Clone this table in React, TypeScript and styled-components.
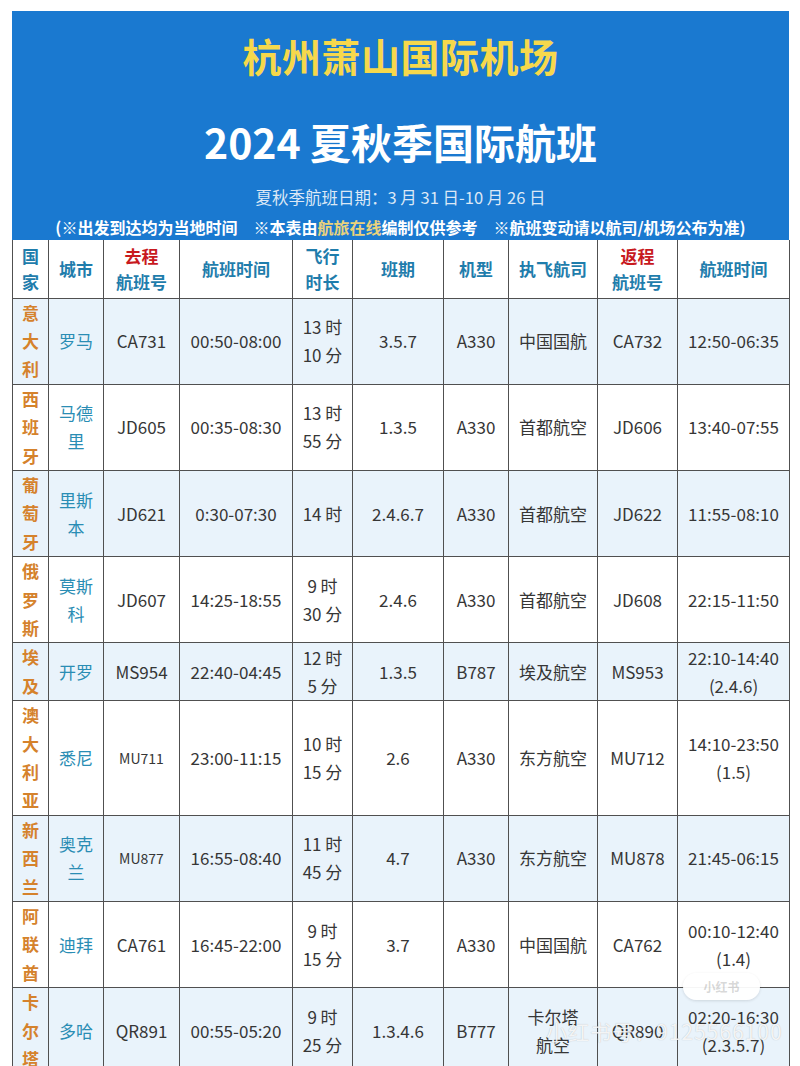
import * as React from 'react';
import styled, { createGlobalStyle } from 'styled-components';

const GlobalStyle = createGlobalStyle`
  html, body {
    margin: 0;
    padding: 0;
    background: #ffffff;
  }
  body {
    font-family: "Noto Sans CJK SC", "Noto Sans", sans-serif;
  }
`;

const Page = styled.div`
  position: relative;
  width: 800px;
  height: 1066px;
  overflow: hidden;
  box-sizing: border-box;
  padding: 11px 11px 0 12px;
  background: #ffffff;
`;

const Banner = styled.header`
  height: 229px;
  background: #1a79d0;
  display: flex;
  flex-direction: column;
  align-items: center;
  text-align: center;
`;

const Title = styled.h1`
  margin: 19px 0 0;
  font-size: 39px;
  line-height: 50px;
  font-weight: 700;
  color: #f6d84c;
  letter-spacing: 0.5px;
`;

const Subtitle = styled.h2`
  margin: 36px 0 0;
  font-size: 41px;
  line-height: 50px;
  font-weight: 700;
  color: #ffffff;
`;

const DateLine = styled.div`
  margin-top: 19px;
  font-size: 16.5px;
  line-height: 24px;
  color: #dce8f6;
`;

const Note = styled.div`
  margin-top: 5px;
  font-size: 16px;
  line-height: 26px;
  font-weight: 700;
  color: #ffffff;
  white-space: pre;
`;

const Mark = styled.span`
  color: #e9d27c;
`;

const Table = styled.table`
  width: 777px;
  border-collapse: collapse;
  table-layout: fixed;
  background: #ffffff;
`;

const HeadRow = styled.tr`
  height: 58px;
`;

const HeadCell = styled.th`
  border: 1.5px solid #505050;
  border-top: none;
  padding: 0;
  font-size: 17px;
  line-height: 26px;
  font-weight: 700;
  color: #1f7dac;
  text-align: center;
  vertical-align: middle;
  white-space: pre-line;
`;

const Red = styled.span`
  color: #c8191e;
`;

const Row = styled.tr<{ $shade: boolean }>`
  background: ${p => (p.$shade ? '#e9f3fb' : '#ffffff')};
`;

const Cell = styled.td<{ $small?: boolean }>`
  border: 1.5px solid #505050;
  padding: 0;
  font-size: ${p => (p.$small ? '14px' : '17px')};
  line-height: 28px;
  color: #363636;
  text-align: center;
  vertical-align: middle;
  white-space: pre-line;
`;

const CountryCell = styled(Cell)`
  line-height: 28.4px;
  font-weight: 700;
  color: #d5822c;
`;

const CityCell = styled(Cell)`
  color: #2a8db4;
`;

const Watermark = styled.div`
  position: absolute;
  left: 546px;
  top: 1016px;
  font-size: 21px;
  line-height: 30px;
  color: rgba(255, 255, 255, 0.85);
  text-shadow: 0 0 1px rgba(0, 0, 0, 0.25);
  letter-spacing: 1px;
  white-space: nowrap;
  pointer-events: none;
`;

const Badge = styled.div`
  position: absolute;
  left: 683px;
  top: 973px;
  width: 77px;
  height: 27px;
  border-radius: 14px;
  background: rgba(255, 255, 255, 0.94);
  box-shadow: 0 1px 3px rgba(0, 0, 0, 0.12);
  font-size: 12px;
  line-height: 27px;
  font-weight: 700;
  text-align: center;
  color: rgba(120, 120, 120, 0.3);
`;

type Flight = {
  country: string;
  city: string;
  out: string;
  small?: boolean;
  time: string;
  dur: string;
  days: string;
  plane: string;
  airline: string;
  back: string;
  backTime: string;
};

const flights: Flight[] = [
  { country: '意大利', city: '罗马', out: 'CA731', time: '00:50-08:00', dur: '13 时\n10 分', days: '3.5.7', plane: 'A330', airline: '中国国航', back: 'CA732', backTime: '12:50-06:35' },
  { country: '西班牙', city: '马德\n里', out: 'JD605', time: '00:35-08:30', dur: '13 时\n55 分', days: '1.3.5', plane: 'A330', airline: '首都航空', back: 'JD606', backTime: '13:40-07:55' },
  { country: '葡萄牙', city: '里斯\n本', out: 'JD621', time: '0:30-07:30', dur: '14 时', days: '2.4.6.7', plane: 'A330', airline: '首都航空', back: 'JD622', backTime: '11:55-08:10' },
  { country: '俄罗斯', city: '莫斯\n科', out: 'JD607', time: '14:25-18:55', dur: '9 时\n30 分', days: '2.4.6', plane: 'A330', airline: '首都航空', back: 'JD608', backTime: '22:15-11:50' },
  { country: '埃及', city: '开罗', out: 'MS954', time: '22:40-04:45', dur: '12 时\n5 分', days: '1.3.5', plane: 'B787', airline: '埃及航空', back: 'MS953', backTime: '22:10-14:40\n(2.4.6)' },
  { country: '澳大利亚', city: '悉尼', out: 'MU711', small: true, time: '23:00-11:15', dur: '10 时\n15 分', days: '2.6', plane: 'A330', airline: '东方航空', back: 'MU712', backTime: '14:10-23:50\n(1.5)' },
  { country: '新西兰', city: '奥克\n兰', out: 'MU877', small: true, time: '16:55-08:40', dur: '11 时\n45 分', days: '4.7', plane: 'A330', airline: '东方航空', back: 'MU878', backTime: '21:45-06:15' },
  { country: '阿联酋', city: '迪拜', out: 'CA761', time: '16:45-22:00', dur: '9 时\n15 分', days: '3.7', plane: 'A330', airline: '中国国航', back: 'CA762', backTime: '00:10-12:40\n(1.4)' },
  { country: '卡尔塔', city: '多哈', out: 'QR891', time: '00:55-05:20', dur: '9 时\n25 分', days: '1.3.4.6', plane: 'B777', airline: '卡尔塔\n航空', back: 'QR890', backTime: '02:20-16:30\n(2.3.5.7)' },
];

const widths = [36, 55, 76, 113, 60, 91, 65, 89, 80, 112];

const App: React.FC = () => {
  return (
    <Page>
      <GlobalStyle />
      <Banner>
        <Title>杭州萧山国际机场</Title>
        <Subtitle>2024 夏秋季国际航班</Subtitle>
        <DateLine>夏秋季航班日期：3 月 31 日-10 月 26 日</DateLine>
        <Note>
          {'(※出发到达均为当地时间\u3000※本表由'}
          <Mark>航旅在线</Mark>
          {'编制仅供参考\u3000※航班变动请以航司/机场公布为准)'}
        </Note>
      </Banner>
      <Table>
        <colgroup>
          {widths.map((w, i) => (
            <col key={i} style={{ width: w }} />
          ))}
        </colgroup>
        <thead>
          <HeadRow>
            <HeadCell>{'国\n家'}</HeadCell>
            <HeadCell>城市</HeadCell>
            <HeadCell>
              <Red>去程</Red>
              {'\n航班号'}
            </HeadCell>
            <HeadCell>航班时间</HeadCell>
            <HeadCell>{'飞行\n时长'}</HeadCell>
            <HeadCell>班期</HeadCell>
            <HeadCell>机型</HeadCell>
            <HeadCell>执飞航司</HeadCell>
            <HeadCell>
              <Red>返程</Red>
              {'\n航班号'}
            </HeadCell>
            <HeadCell>航班时间</HeadCell>
          </HeadRow>
        </thead>
        <tbody>
          {flights.map((f, i) => (
            <Row key={f.out} $shade={i % 2 === 0}>
              <CountryCell>{f.country.split('').join('\n')}</CountryCell>
              <CityCell>{f.city}</CityCell>
              <Cell $small={f.small}>{f.out}</Cell>
              <Cell>{f.time}</Cell>
              <Cell>{f.dur}</Cell>
              <Cell>{f.days}</Cell>
              <Cell>{f.plane}</Cell>
              <Cell>{f.airline}</Cell>
              <Cell>{f.back}</Cell>
              <Cell>{f.backTime}</Cell>
            </Row>
          ))}
        </tbody>
      </Table>
      <Badge>小红书</Badge>
      <Watermark>小红书号：9125566100</Watermark>
    </Page>
  );
};

export default App;
